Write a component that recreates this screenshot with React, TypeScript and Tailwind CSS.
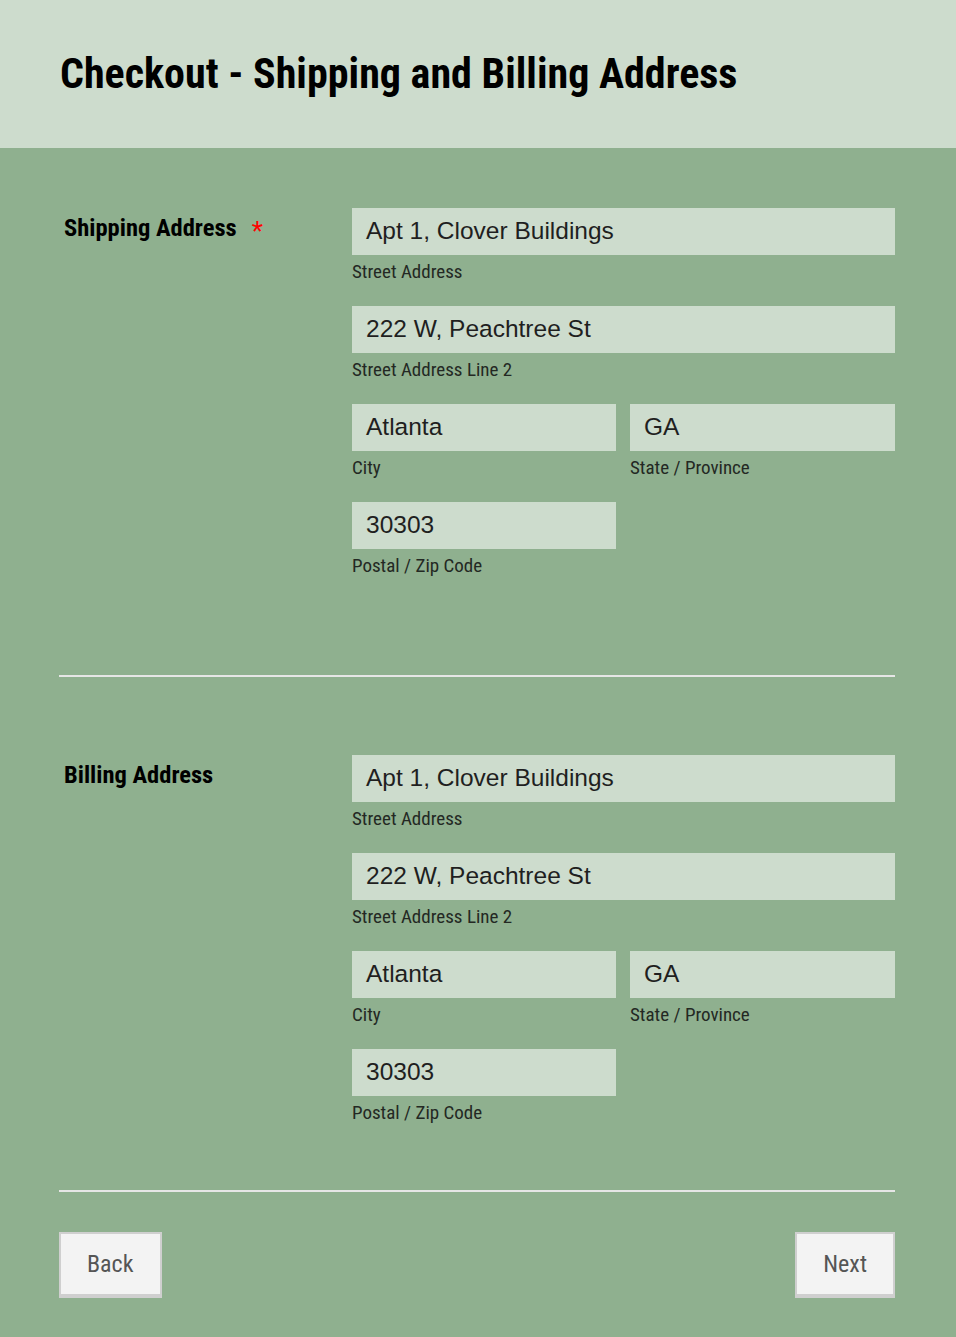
import React from 'react';

const cond = "font-['Roboto_Condensed',Roboto,'Liberation_Sans',sans-serif] [font-stretch:75%]";

const Field: React.FC<{ value: string; label: string; className?: string }> = ({ value, label, className }) => (
    <div className={className}>
        <div className="h-[47px] bg-[#cddccd] pl-[14px] flex items-center font-['Liberation_Sans',Arial,sans-serif] text-[24.5px] text-[#1f1f1f]">
            {value}
        </div>
        <div className={`${cond} text-[19px] leading-[22px] mt-[6px] mb-[-1px] text-[#232823]`}>{label}</div>
    </div>
);

const AddressBlock: React.FC<{ title: string; required?: boolean }> = ({ title, required }) => (
    <div className="flex">
        <div className="w-[293px] pl-[5px] pt-[4px] flex items-start">
            <span className={`${cond} font-bold text-[24.5px] leading-[32px] text-black`}>{title}</span>
            {required && <span className={`${cond} ml-[15px] mt-[6px] text-[26px] leading-[26px] text-[#ff0000]`}>*</span>}
        </div>
        <div className="flex-1 flex flex-col gap-[24px]">
            <Field value="Apt 1, Clover Buildings" label="Street Address" />
            <Field value="222 W, Peachtree St" label="Street Address Line 2" />
            <div className="flex gap-[14px]">
                <Field value="Atlanta" label="City" className="w-[264px]" />
                <Field value="GA" label="State / Province" className="flex-1" />
            </div>
            <div className="flex gap-[14px]">
                <Field value="30303" label="Postal / Zip Code" className="w-[264px]" />
            </div>
        </div>
    </div>
);

const Button: React.FC<{ children: React.ReactNode }> = ({ children }) => (
    <button className={`${cond} h-[66px] px-[26px] bg-[#f3f3f3] border-2 border-b-[4px] border-[#cfcfcf] text-[24px] text-[#555]`}>
        {children}
    </button>
);

export default function App() {
    return (
        <div className="min-h-[1337px] bg-[#8fb08f]">
            <header className="h-[148px] bg-[#cddccd] flex items-center pl-[60px]">
                <h1 className={`${cond} font-bold text-[42px] text-black pb-[2px]`}>
                    Checkout - Shipping and Billing Address
                </h1>
            </header>
            <main className="px-[59px] mr-[2px]">
                <div className="pt-[60px] pb-[99px] border-b-2 border-[#e6e6e6]">
                    <AddressBlock title="Shipping Address" required />
                </div>
                <div className="pt-[78px] pb-[67px] border-b-2 border-[#e6e6e6]">
                    <AddressBlock title="Billing Address" />
                </div>
                <div className="flex justify-between pt-[40px]">
                    <Button>Back</Button>
                    <Button>Next</Button>
                </div>
            </main>
        </div>
    );
}
